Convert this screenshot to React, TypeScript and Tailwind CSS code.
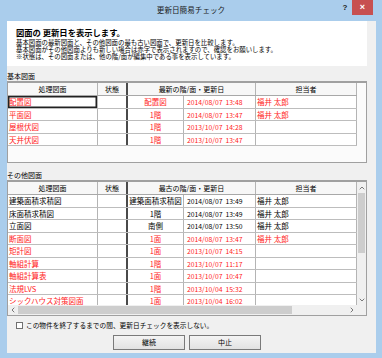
import { ChevronUp, ChevronDown, ChevronLeft, ChevronRight } from "lucide-react";

type Row = {
  name: string;
  floor: string;
  date: string;
  user: string;
  red: boolean;
};

const basicRows: Row[] = [
  { name: "配置図", floor: "配置図", date: "2014/08/07  13:48", user: "福井 太郎", red: true },
  { name: "平面図", floor: "1階", date: "2014/08/07  13:47", user: "福井 太郎", red: true },
  { name: "屋根伏図", floor: "1階", date: "2013/10/07  14:28", user: "", red: true },
  { name: "天井伏図", floor: "1階", date: "2013/10/07  13:47", user: "", red: true },
];

const otherRows: Row[] = [
  { name: "建築面積求積図", floor: "建築面積求積図", date: "2014/08/07  13:49", user: "福井 太郎", red: false },
  { name: "床面積求積図", floor: "1階", date: "2014/08/07  13:49", user: "福井 太郎", red: false },
  { name: "立面図", floor: "南側", date: "2014/08/07  13:50", user: "福井 太郎", red: false },
  { name: "断面図", floor: "1面", date: "2014/08/07  13:47", user: "福井 太郎", red: true },
  { name: "矩計図", floor: "1面", date: "2013/10/07  14:15", user: "", red: true },
  { name: "軸組計算", floor: "1階", date: "2013/10/07  11:17", user: "", red: true },
  { name: "軸組計算表", floor: "1面", date: "2013/10/07  10:47", user: "", red: true },
  { name: "法規LVS", floor: "1階", date: "2013/10/04  15:32", user: "", red: true },
  { name: "シックハウス対策図面", floor: "1面", date: "2013/10/04  16:02", user: "", red: true },
];

const TableHeader = ({ title }: { title: string }) => (
  <div className="grid grid-cols-[90px_30px_128px_101px] h-[13px] shrink-0 bg-[#f7f7f7] border-b border-[#a8a8a8] text-[7px] text-black">
    <div className="flex items-center justify-center border-r border-[#b4b4b4]">処理図面</div>
    <div className="flex items-center justify-center border-r-2 border-[#4a4a4a]">状態</div>
    <div className="flex items-center justify-center border-r border-[#b4b4b4]">{title}</div>
    <div className="flex items-center justify-center border-r border-[#b4b4b4]">担当者</div>
  </div>
);

const TableRow = ({ row, index, focused }: { row: Row; index: number; focused?: boolean }) => {
  const color = row.red ? "text-[#ff1a1a]" : "text-black";
  const height = index % 2 === 0 ? "h-[13px]" : "h-[12px]";
  return (
    <div
      className={`grid grid-cols-[90px_30px_56px_72px_101px] ${height} shrink-0 bg-white border-b border-[#bdbdbd] text-[7.5px] whitespace-nowrap ${color}`}
    >
      <div
        className={`flex items-center pl-[1px] border-r border-[#b4b4b4] ${
          focused ? "shadow-[inset_0_0_0_1.5px_#222]" : ""
        }`}
      >
        {row.name}
      </div>
      <div className="border-r-2 border-[#4a4a4a]" />
      <div className="flex items-center justify-center border-r border-[#b4b4b4]">{row.floor}</div>
      <div className="flex items-center pl-[3px] border-r border-[#b4b4b4] whitespace-pre text-[6.8px]">
        {row.date}
      </div>
      <div className="flex items-center pl-[1px] border-r border-[#b4b4b4]">{row.user}</div>
    </div>
  );
};

const Button = ({ label }: { label: string }) => (
  <button className="w-[72px] h-[15px] flex items-center justify-center border border-[#7a7a7a] bg-gradient-to-b from-[#f4f4f4] to-[#e2e2e2] text-[7px] text-black">
    {label}
  </button>
);

export default function App() {
  return (
    <div className="w-[382px] h-[358px] bg-[#aacdec] flex flex-col font-['Noto_Sans_CJK_JP','Noto_Sans_CJK_SC',sans-serif] overflow-hidden">
      {/* title bar */}
      <div className="h-[21px] flex shrink-0">
        <div className="w-[44px]" />
        <div className="flex-1 flex items-center justify-center text-[7.6px] text-[#1a1a1a] pb-[1px]">
          更新日簡易チェック
        </div>
        <div className="w-[44px] flex items-start pr-[9px]">
          <div className="w-[14px] h-[15px] flex items-center justify-center text-[8px] font-bold text-[#222] font-['Liberation_Sans',sans-serif]">
            ?
          </div>
          <div className="w-[21px] h-[15px] bg-[#c75050] flex items-center justify-center text-white text-[9px] font-bold font-['Liberation_Sans',sans-serif]">
            ×
          </div>
        </div>
      </div>

      {/* content */}
      <div className="flex-1 ml-[7px] mr-[6px] mb-[5px] bg-[#f0f0f0] pr-[9px] flex flex-col">
        <div className="h-[45px] bg-white pl-[9px] pt-[6px] shrink-0 text-black">
          <div className="text-[8.3px] font-bold leading-[10px]">図面の 更新日を表示します。</div>
          <div className="mt-[2px] text-[6.4px] leading-[7.2px] whitespace-nowrap">
            <div>基本図面の最新図面と、その他図面の最も古い図面で、更新日を比較します。</div>
            <div>基本図面がその他図面よりも新しい場合は赤字で表示されますので、確認をお願いします。</div>
            <div>※状態は、その図面または、他の階/面が編集中である事を表示しています。</div>
          </div>
        </div>

        <div className="mt-[5px] h-[10px] flex items-center text-[7px] text-black shrink-0">基本図面</div>
        <div className="h-[82px] shrink-0 border border-t-2 border-[#a0a0a0] bg-[#fbfbfb] flex flex-col">
          <div className="w-[349px] flex flex-col">
            <TableHeader title="最新の階/面・更新日" />
            {basicRows.map((r, i) => (
              <TableRow key={r.name} row={r} index={i} focused={i === 0} />
            ))}
          </div>
        </div>

        <div className="mt-[7px] h-[10px] flex items-center text-[7px] text-black shrink-0">その他図面</div>
        <div className="h-[136px] shrink-0 border border-t-2 border-[#a0a0a0] bg-[#fbfbfb] flex flex-col">
          <div className="flex-1 flex min-h-0">
            <div className="w-[349px] flex flex-col overflow-hidden">
              <TableHeader title="最古の階/面・更新日" />
              {otherRows.map((r, i) => (
                <TableRow key={r.name} row={r} index={i} />
              ))}
            </div>
            {/* vertical scrollbar */}
            <div className="flex-1 flex flex-col bg-[#f0f0f0]">
              <div className="h-[11px] flex items-center justify-center text-[#606060]">
                <ChevronUp size={8} strokeWidth={2.5} />
              </div>
              <div className="h-[60px] mx-[1px] bg-[#cdcdcd]" />
              <div className="flex-1" />
              <div className="h-[11px] flex items-center justify-center text-[#606060]">
                <ChevronDown size={8} strokeWidth={2.5} />
              </div>
            </div>
          </div>
          {/* horizontal scrollbar */}
          <div className="h-[10px] flex shrink-0 bg-[#f0f0f0]">
            <div className="w-[10px] flex items-center justify-center text-[#606060]">
              <ChevronLeft size={8} strokeWidth={2.5} />
            </div>
            <div className="w-[274px] my-[1px] bg-[#cdcdcd]" />
            <div className="flex-1" />
            <div className="w-[11px] flex items-center justify-center text-[#606060]">
              <ChevronRight size={8} strokeWidth={2.5} />
            </div>
            <div className="w-[9px] bg-[#f0f0f0]" />
          </div>
        </div>

        <div className="mt-[4px] h-[11px] flex items-center pl-[9px] gap-[3px] shrink-0">
          <div className="w-[7px] h-[7px] border border-[#707070] bg-white" />
          <span className="text-[6.7px] text-black whitespace-nowrap">
            この物件を終了するまでの間、更新日チェックを表示しない。
          </span>
        </div>

        <div className="mt-[4px] flex justify-center gap-[4px] shrink-0">
          <Button label="継続" />
          <Button label="中止" />
        </div>
      </div>
    </div>
  );
}
